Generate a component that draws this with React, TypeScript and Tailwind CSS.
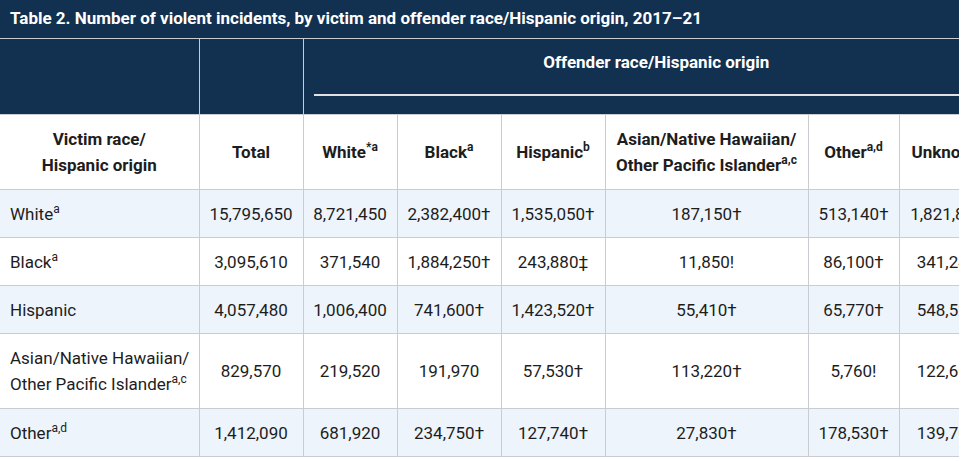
import React from "react";

const NAVY = "bg-[#12304f]";

function S({ children, bold }: { children: React.ReactNode; bold?: boolean }) {
  return (
    <sup className={`text-[12px] relative -top-[7px] align-baseline ${bold ? "font-bold" : "font-normal"}`}>{children}</sup>
  );
}

type Row = { label: React.ReactNode; cells: string[]; stripe: boolean; tall?: boolean };

const rows: Row[] = [
  {
    label: (
      <>
        White<S>a</S>
      </>
    ),
    cells: ["15,795,650", "8,721,450", "2,382,400†", "1,535,050†", "187,150†", "513,140†", "1,821,850"],
    stripe: true,
  },
  {
    label: (
      <>
        Black<S>a</S>
      </>
    ),
    cells: ["3,095,610", "371,540", "1,884,250†", "243,880‡", "11,850!", "86,100†", "341,240"],
    stripe: false,
  },
  {
    label: <>Hispanic</>,
    cells: ["4,057,480", "1,006,400", "741,600†", "1,423,520†", "55,410†", "65,770†", "548,520"],
    stripe: true,
  },
  {
    label: (
      <>
        Asian/Native Hawaiian/
        <br />
        Other Pacific Islander<S>a,c</S>
      </>
    ),
    cells: ["829,570", "219,520", "191,970", "57,530†", "113,220†", "5,760!", "122,600"],
    stripe: false,
    tall: true,
  },
  {
    label: (
      <>
        Other<S>a,d</S>
      </>
    ),
    cells: ["1,412,090", "681,920", "234,750†", "127,740†", "27,830†", "178,530†", "139,700"],
    stripe: true,
  },
];

const colWidths = [199, 104, 94, 104, 104, 203, 91, 96];

export default function App() {
  return (
    <div className="w-[966px] h-[461px] bg-white" style={{ fontFamily: "Roboto, 'Liberation Sans', sans-serif" }}>
      <div className="w-[959px] overflow-hidden">
        <div className={`${NAVY} h-[39px] flex items-center px-[10px] text-white font-bold text-[17px] border-b border-[#c9ccd0]`}>
          Table 2. Number of violent incidents, by victim and offender race/Hispanic origin, 2017–21
        </div>
        <table className="table-fixed border-collapse w-[995px] text-[17px] text-[#1d1d1d]">
          <colgroup>
            {colWidths.map((w, i) => (
              <col key={i} style={{ width: w }} />
            ))}
          </colgroup>
          <thead>
            <tr className={NAVY}>
              <th className="border-r border-b border-[#c9ccd0] p-0"></th>
              <th className="border-x border-b border-[#c9ccd0] p-0"></th>
              <th colSpan={6} className="border-l border-b border-[#c9ccd0] p-0 align-top">
                <div className="pt-[10px] pl-[14px] leading-[26px] text-white font-bold text-center">
                  Offender race/Hispanic origin
                </div>
                <div className="mt-[19px] ml-[10px] h-[2px] bg-[#dfe1e4]"></div>
                <div className="h-[18px]"></div>
              </th>
            </tr>
            <tr className="bg-white font-bold">
              <th className="border-r border-b border-[#c9ccd0] py-[11px] leading-[26px] text-center">
                Victim race/
                <br />
                Hispanic origin
              </th>
              <th className="border border-[#c9ccd0] py-[11px] leading-[26px]">Total</th>
              <th className="border border-[#c9ccd0] py-[11px] leading-[26px]">
                White<S bold>*a</S>
              </th>
              <th className="border border-[#c9ccd0] py-[11px] leading-[26px]">
                Black<S bold>a</S>
              </th>
              <th className="border border-[#c9ccd0] py-[11px] leading-[26px]">
                Hispanic<S bold>b</S>
              </th>
              <th className="border border-[#c9ccd0] py-[11px] leading-[26px]">
                Asian/Native Hawaiian/
                <br />
                Other Pacific Islander<S bold>a,c</S>
              </th>
              <th className="border border-[#c9ccd0] py-[11px] leading-[26px]">
                Other<S bold>a,d</S>
              </th>
              <th className="border border-[#c9ccd0] py-[11px] leading-[26px] whitespace-nowrap">Unknown</th>
            </tr>
          </thead>
          <tbody>
            {rows.map((r, i) => {
              const pad = r.tall ? "py-[11px]" : "pt-[11px] pb-[10px]";
              return (
                <tr key={i} className={r.stripe ? "bg-[#edf4fb]" : "bg-white"}>
                  <td className={`border-r border-b border-[#c9ccd0] ${pad} pl-[10px] leading-[26px] text-left`}>{r.label}</td>
                  {r.cells.map((c, j) => (
                    <td key={j} className={`border border-[#c9ccd0] ${pad} leading-[26px] text-center whitespace-nowrap`}>
                      {c}
                    </td>
                  ))}
                </tr>
              );
            })}
          </tbody>
        </table>
      </div>
    </div>
  );
}
